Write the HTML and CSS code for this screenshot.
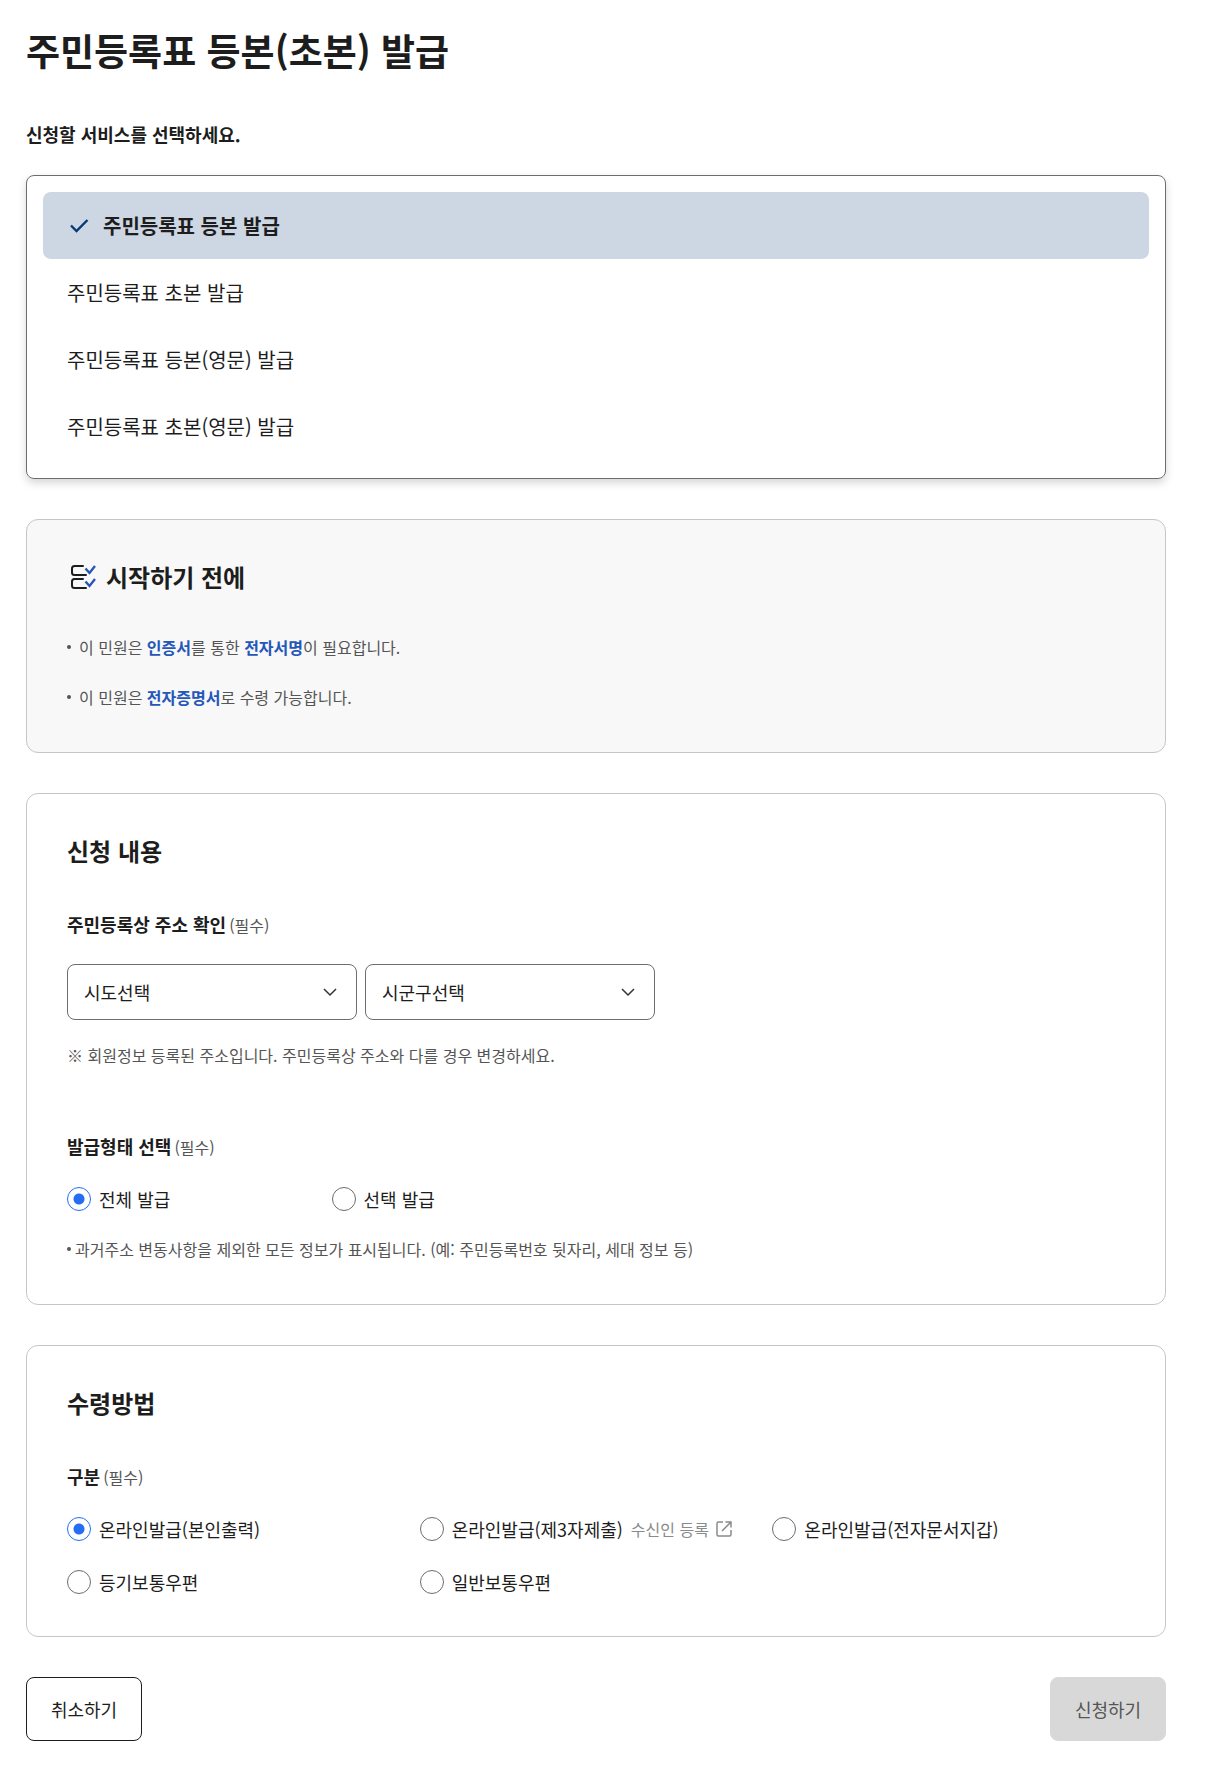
FILE: index.html
```html
<!DOCTYPE html>
<html lang="ko">
<head>
    <meta charset="UTF-8">
    <meta name="viewport" content="width=device-width, initial-scale=1.0">
    <title>주민등록표 등본(초본) 발급</title>
    <link rel="stylesheet" href="styles.css">
</head>
<body>
    <form class="container">
        <h1>주민등록표 등본(초본) 발급</h1>
        <p class="guide">신청할 서비스를 선택하세요.</p>

        <ul class="service-list">
            <li>
                <button type="button" class="service active">
                    <svg width="24" height="24" viewBox="0 0 24 24" fill="none" stroke="#063a74" stroke-width="2.4" aria-hidden="true">
                        <path d="M4 11.500l5.500 5.500L20.500 6"/>
                    </svg>
                    주민등록표 등본 발급
                </button>
            </li>
            <li><button type="button" class="service">주민등록표 초본 발급</button></li>
            <li><button type="button" class="service">주민등록표 등본(영문) 발급</button></li>
            <li><button type="button" class="service">주민등록표 초본(영문) 발급</button></li>
        </ul>

        <section class="card card-info">
            <h2>
                <svg width="32" height="32" viewBox="0 0 32 32" fill="none" stroke-width="2" aria-hidden="true">
                    <path stroke="#1d1d1d" stroke-linecap="round" d="M16 5H7.500Q5 5 5 7.500V11.500Q5 14 7.500 14H19M16 18H7.500Q5 18 5 20.500V24.500Q5 27 7.500 27H19"/>
                    <path stroke="#2457b8" stroke-width="2.4" d="M18.500 7.500l4 4.500L28 5M18.500 20.500l4 4.500L28 18"/>
                </svg>
                시작하기 전에
            </h2>
            <ul class="info-list">
                <li>이 민원은 <strong>인증서</strong>를 통한 <strong>전자서명</strong>이 필요합니다.</li>
                <li>이 민원은 <strong>전자증명서</strong>로 수령 가능합니다.</li>
            </ul>
        </section>

        <section class="card">
            <h2>신청 내용</h2>
            <fieldset>
                <legend>주민등록상 주소 확인<span>(필수)</span></legend>
                <div class="selects">
                    <div class="select-box">
                        <select name="sido" aria-label="시도선택">
                            <option>시도선택</option>
                        </select>
                        <svg width="16" height="16" viewBox="0 0 16 16" fill="none" stroke="#333" stroke-width="1.500" aria-hidden="true">
                            <path d="M2 5l6 6 6-6"/>
                        </svg>
                    </div>
                    <div class="select-box">
                        <select name="sigungu" aria-label="시군구선택">
                            <option>시군구선택</option>
                        </select>
                        <svg width="16" height="16" viewBox="0 0 16 16" fill="none" stroke="#333" stroke-width="1.500" aria-hidden="true">
                            <path d="M2 5l6 6 6-6"/>
                        </svg>
                    </div>
                </div>
                <p class="note">※ 회원정보 등록된 주소입니다. 주민등록상 주소와 다를 경우 변경하세요.</p>
            </fieldset>
            <fieldset>
                <legend>발급형태 선택<span>(필수)</span></legend>
                <div class="radios radios-four">
                    <div class="radio">
                        <input type="radio" name="type" id="type-all" checked>
                        <label for="type-all">전체 발급</label>
                    </div>
                    <div class="radio">
                        <input type="radio" name="type" id="type-part">
                        <label for="type-part">선택 발급</label>
                    </div>
                </div>
                <p class="note note-dot">과거주소 변동사항을 제외한 모든 정보가 표시됩니다. (예: 주민등록번호 뒷자리, 세대 정보 등)</p>
            </fieldset>
        </section>

        <section class="card">
            <h2>수령방법</h2>
            <fieldset>
                <legend>구분<span>(필수)</span></legend>
                <div class="radios">
                    <div class="radio">
                        <input type="radio" name="receive" id="receive-print" checked>
                        <label for="receive-print">온라인발급(본인출력)</label>
                    </div>
                    <div class="radio">
                        <input type="radio" name="receive" id="receive-third">
                        <label for="receive-third">온라인발급(제3자제출)</label>
                        <a href="#" class="link">
                            수신인 등록
                            <svg width="18" height="18" viewBox="0 0 18 18" fill="none" stroke="currentColor" stroke-width="1.500" aria-hidden="true">
                                <path d="M8 2H3.500Q2 2 2 3.500V14.500Q2 16 3.500 16H14.500Q16 16 16 14.500V10M10.500 2H16V7.500M16 2L7 11"/>
                            </svg>
                        </a>
                    </div>
                    <div class="radio">
                        <input type="radio" name="receive" id="receive-wallet">
                        <label for="receive-wallet">온라인발급(전자문서지갑)</label>
                    </div>
                    <div class="radio">
                        <input type="radio" name="receive" id="receive-registered">
                        <label for="receive-registered">등기보통우편</label>
                    </div>
                    <div class="radio">
                        <input type="radio" name="receive" id="receive-mail">
                        <label for="receive-mail">일반보통우편</label>
                    </div>
                </div>
            </fieldset>
        </section>

        <div class="buttons">
            <button type="button" class="btn">취소하기</button>
            <button type="submit" class="btn btn-submit" disabled>신청하기</button>
        </div>
    </form>
</body>
</html>
```
FILE: styles.css
```css
* {
    box-sizing: border-box;
}

body {
    margin: 0;
    padding: 22px 43px 32px 26px;
    font-family: "Noto Sans CJK KR", sans-serif;
    font-size: 18px;
    line-height: 24px;
    color: #1d1d1d;
    background-color: #fff;
}

h1, h2, p, ul, fieldset {
    margin: 0;
    padding: 0;
}

ul {
    list-style: none;
}

button, select {
    font-family: inherit;
    font-size: 18px;
    color: inherit;
    cursor: pointer;
}

h1 {
    font-size: 37px;
    line-height: 56px;
}

.guide {
    margin: 40px 0 25px;
    font-weight: bold;
    line-height: 32px;
}

/* service list */
.service-list {
    padding: 16px 16px 18px;
    border: 1px solid #6d6d6d;
    border-radius: 8px;
    box-shadow: 0 4px 8px rgba(0, 0, 0, 0.16);
}

.service {
    display: flex;
    align-items: center;
    gap: 12px;
    width: 100%;
    height: 67px;
    padding: 0 24px;
    border: none;
    border-radius: 8px;
    background: none;
    font-size: 20px;
    text-align: left;
}

.service.active {
    background-color: #cdd6e3;
    font-weight: bold;
}

/* cards */
.card {
    margin-top: 40px;
    padding: 39px 40px 42px;
    border: 1px solid #c6c6c6;
    border-radius: 12px;
}

.card-info {
    background-color: #f8f8f8;
}

.card h2 {
    display: flex;
    align-items: center;
    gap: 7px;
    margin-bottom: 39px;
    font-size: 24px;
    line-height: 36px;
}

.info-list {
    display: grid;
    gap: 24px;
}

.info-list li {
    display: flex;
    align-items: center;
    white-space: pre-wrap;
    font-size: 16px;
    line-height: 26px;
    color: #555;
}

.info-list li::before,
.note-dot::before {
    content: "";
    flex: none;
    width: 4px;
    height: 4px;
    margin-right: 8px;
    border-radius: 50%;
    background-color: #555;
}

.info-list strong {
    color: #2457b8;
}

/* form */
fieldset {
    border: none;
    min-width: 0;
}

fieldset + fieldset {
    margin-top: 62px;
}

legend {
    padding: 0;
    font-weight: bold;
    line-height: 32px;
}

legend span {
    margin-left: 3px;
    font-size: 16px;
    font-weight: normal;
    line-height: 24px;
    color: #555;
}

.selects {
    display: flex;
    gap: 8px;
    margin-top: 24px;
}

.select-box {
    position: relative;
    width: 290px;
}

.select-box select {
    appearance: none;
    display: block;
    width: 100%;
    height: 56px;
    padding: 0 48px 0 16px;
    border: 1px solid #6d6d6d;
    border-radius: 8px;
    background-color: #fff;
}

.select-box svg {
    position: absolute;
    top: 20px;
    right: 19px;
    pointer-events: none;
}

.note {
    margin-top: 22px;
    font-size: 16px;
    line-height: 26px;
    color: #555;
}

.note-dot {
    display: flex;
    align-items: center;
    margin-top: 25px;
}

.note-dot::before {
    margin-right: 4px;
}

.radios {
    display: grid;
    grid-template-columns: repeat(3, 1fr);
    row-gap: 29px;
    margin-top: 25px;
}

.radios-four {
    grid-template-columns: repeat(4, 1fr);
}

.radio {
    display: flex;
    align-items: center;
    gap: 8px;
    white-space: nowrap;
}

.radio input {
    appearance: none;
    width: 24px;
    height: 24px;
    margin: 0;
    border: 1px solid #6d6d6d;
    border-radius: 50%;
    background-color: #fff;
}

.radio input:checked {
    border-color: #256ef4;
    background: radial-gradient(circle, #256ef4 5px, #fff 6px);
}

.link {
    display: flex;
    align-items: center;
    gap: 6px;
    font-size: 16px;
    color: #8a8a8a;
    text-decoration: none;
}

/* buttons */
.buttons {
    display: flex;
    justify-content: space-between;
    margin-top: 40px;
}

.btn {
    min-width: 116px;
    height: 64px;
    border: 1px solid #1d1d1d;
    border-radius: 8px;
    background-color: #fff;
}

.btn-submit {
    border-color: #d8d8d8;
    background-color: #d8d8d8;
    color: #555;
    cursor: default;
}
```
